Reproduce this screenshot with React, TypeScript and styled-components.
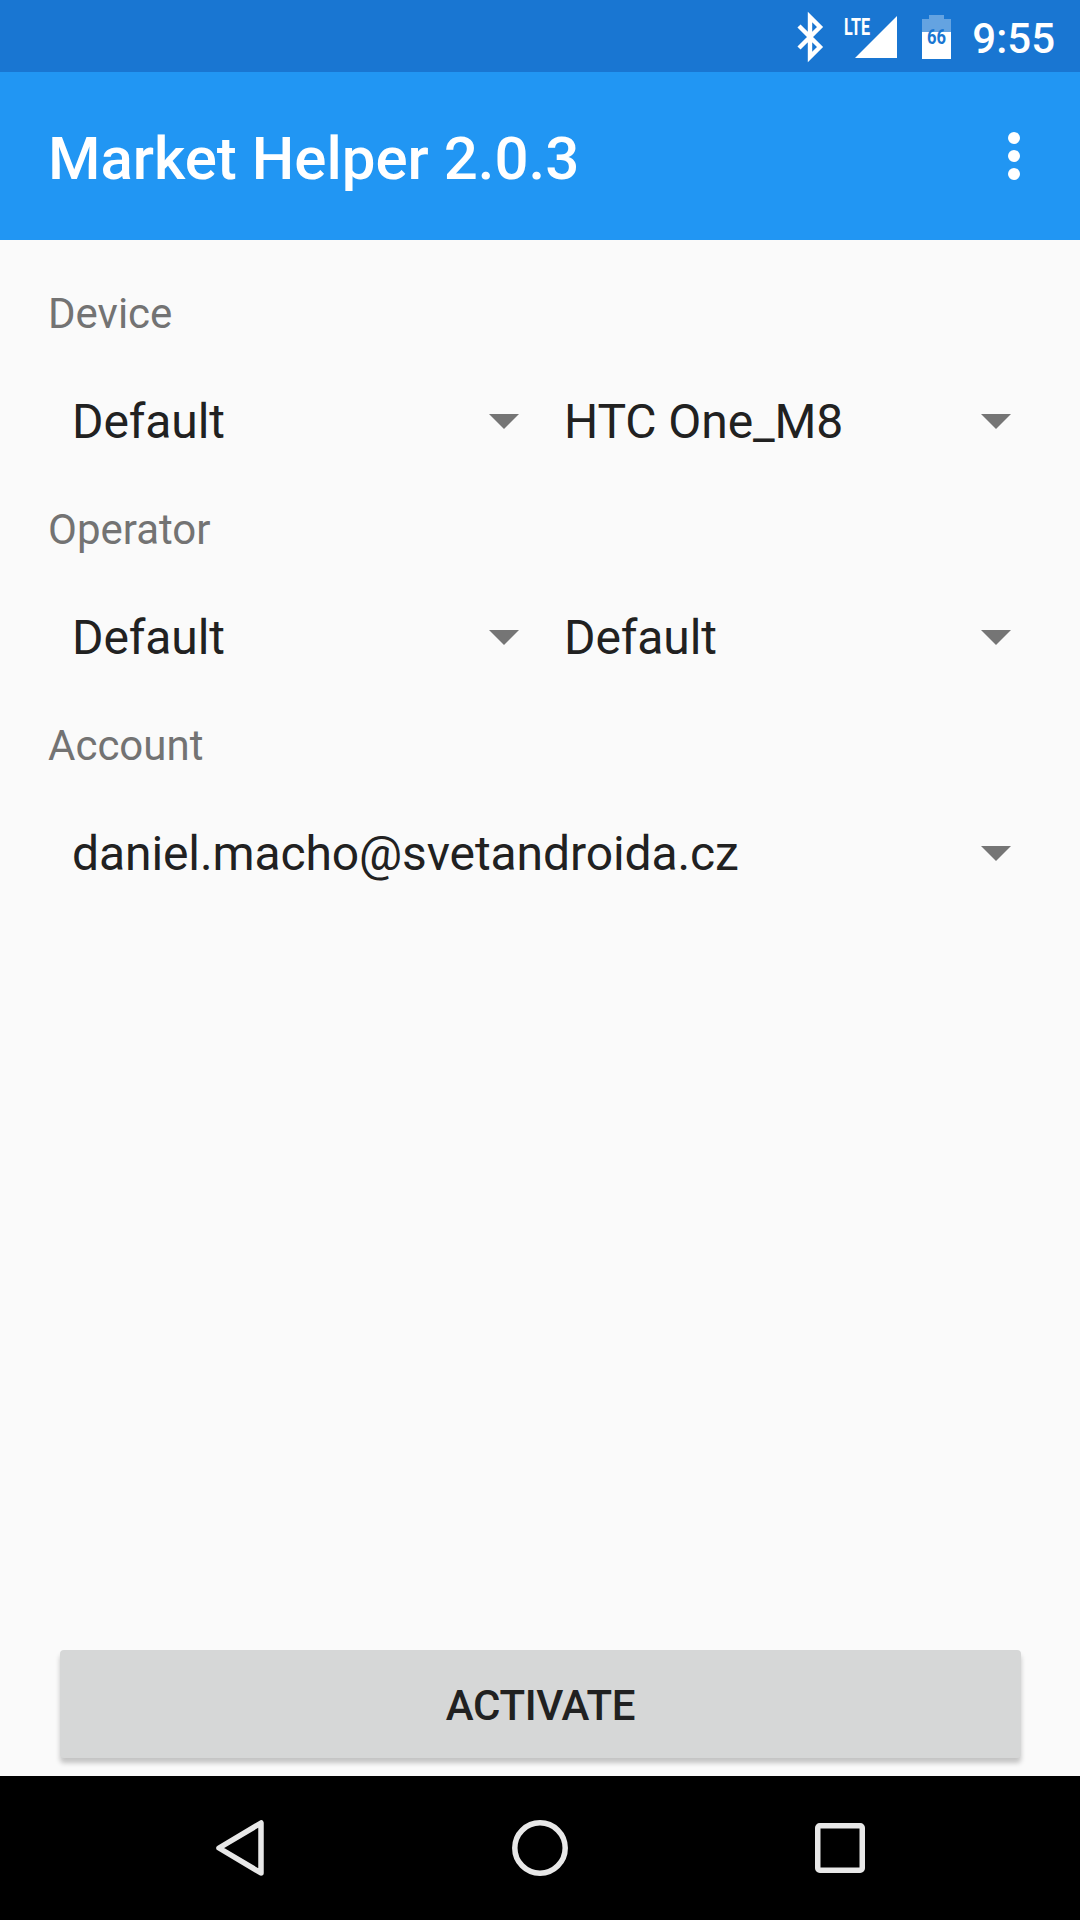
import React from 'react'
import styled, { createGlobalStyle } from 'styled-components'

const GlobalStyle = createGlobalStyle`
  html, body {
    margin: 0;
    padding: 0;
    background: #fafafa;
  }
  body {
    font-family: Roboto, "Liberation Sans", sans-serif;
  }
`

const Page = styled.div`
  width: 1080px;
  height: 1920px;
  display: flex;
  flex-direction: column;
  overflow: hidden;
  background: #fafafa;
`

const StatusBar = styled.div`
  height: 72px;
  box-sizing: border-box;
  flex: none;
  display: flex;
  align-items: center;
  justify-content: flex-end;
  padding: 2px 25px 0 0;
  background: #1976d2;
  color: #fff;
`

const StatusIcon = styled.svg<{ $gap: number }>`
  display: block;
  flex: none;
  overflow: visible;
  margin-right: ${(p) => p.$gap}px;
`

const Clock = styled.span`
  margin-top: 4px;
  font-size: 42px;
  font-weight: 500;
  line-height: 66px;
`

const AppBar = styled.header`
  height: 168px;
  box-sizing: border-box;
  flex: none;
  display: flex;
  align-items: center;
  justify-content: space-between;
  padding: 0 60px 0 48px;
  background: #2196f3;
`

const Title = styled.h1`
  margin: 5px 0 0;
  color: #fff;
  font-size: 60px;
  font-weight: 500;
  line-height: 80px;
`

const Overflow = styled.div`
  display: flex;
  flex-direction: column;
  gap: 6px;
`

const Dot = styled.span`
  width: 12px;
  height: 12px;
  border-radius: 50%;
  background: #fff;
`

const Content = styled.main`
  flex: 1;
  display: flex;
  flex-direction: column;
  padding: 49px 48px 0;
`

const Label = styled.div`
  height: 50px;
  color: #737373;
  font-size: 42px;
  line-height: 50px;
`

const Row = styled.div`
  display: flex;
  height: 166px;
  padding-top: 10px;
  box-sizing: border-box;
`

const Spinner = styled.div`
  flex: 1;
  height: 144px;
  padding: 0 21px 0 24px;
  display: flex;
  align-items: center;
  justify-content: space-between;
  color: #212121;
  font-size: 48px;
  letter-spacing: -0.1px;
`

const Arrow = styled.span`
  width: 0;
  height: 0;
  border-left: 15px solid transparent;
  border-right: 15px solid transparent;
  border-top: 15px solid #757575;
`

const ActivateButton = styled.button`
  margin: auto 11px 18px 12px;
  height: 108px;
  flex: none;
  border: 0;
  border-radius: 4px;
  padding: 2px 0 0;
  background: #d6d7d7;
  box-shadow: 0 5px 5px rgba(0, 0, 0, 0.22);
  color: #212121;
  font-family: Roboto, "Liberation Sans", sans-serif;
  font-size: 42px;
  font-weight: 500;
  letter-spacing: -0.3px;
`

const NavBar = styled.nav`
  height: 144px;
  flex: none;
  display: flex;
  justify-content: center;
  align-items: center;
  background: #000;
`

const NavCell = styled.div`
  width: 300px;
  display: flex;
  justify-content: center;
`

function Bluetooth() {
  return (
    <StatusIcon $gap={20} width="26" height="44" viewBox="0 0 26 44">
      <path d="M2 11 L23 32 L13 42 V2 L23 12 L2 33" fill="none" stroke="#fff" strokeWidth="4.4" />
    </StatusIcon>
  )
}

function Signal() {
  return (
    <StatusIcon $gap={25} width="54" height="44" viewBox="0 0 54 44">
      <path d="M54 1 V43 H12 Z" fill="#fff" />
      <text x="1" y="20" fill="#fff" fontFamily="Roboto" fontWeight="700" fontSize="24" textLength="26" lengthAdjust="spacingAndGlyphs">LTE</text>
    </StatusIcon>
  )
}

function Battery() {
  return (
    <StatusIcon $gap={21} width="29" height="44" viewBox="0 0 29 44">
      <path d="M7 0 H22 V4 H29 V17 H0 V4 H7 Z" fill="#fff" opacity="0.33" />
      <path d="M0 17 H29 V44 H0 Z" fill="#fff" />
      <text x="14.5" y="29" textAnchor="middle" fill="#1976d2" fontFamily="Roboto" fontWeight="700" fontSize="21" textLength="19" lengthAdjust="spacingAndGlyphs">66</text>
    </StatusIcon>
  )
}

const SPINNER_ROWS = [
  { label: 'Device', values: ['Default', 'HTC One_M8'] },
  { label: 'Operator', values: ['Default', 'Default'] },
  { label: 'Account', values: ['daniel.macho@svetandroida.cz'] },
]

export default function App() {
  return (
    <Page>
      <GlobalStyle />
      <StatusBar>
        <Bluetooth />
        <Signal />
        <Battery />
        <Clock>9:55</Clock>
      </StatusBar>
      <AppBar>
        <Title>Market Helper 2.0.3</Title>
        <Overflow>
          <Dot />
          <Dot />
          <Dot />
        </Overflow>
      </AppBar>
      <Content>
        {SPINNER_ROWS.map((row) => (
          <React.Fragment key={row.label}>
            <Label>{row.label}</Label>
            <Row>
              {row.values.map((value, i) => (
                <Spinner key={i}>
                  {value}
                  <Arrow />
                </Spinner>
              ))}
            </Row>
          </React.Fragment>
        ))}
        <ActivateButton>ACTIVATE</ActivateButton>
      </Content>
      <NavBar>
        <NavCell>
          <svg width="48" height="58" viewBox="0 0 48 58">
            <path d="M45 4 V54 L3 29 Z" fill="none" stroke="#e8e8e8" strokeWidth="5.5" strokeLinejoin="round" />
          </svg>
        </NavCell>
        <NavCell>
          <svg width="56" height="56" viewBox="0 0 56 56">
            <circle cx="28" cy="28" r="25.2" fill="none" stroke="#e8e8e8" strokeWidth="5.5" />
          </svg>
        </NavCell>
        <NavCell>
          <svg width="50" height="50" viewBox="0 0 50 50">
            <rect x="2.75" y="2.75" width="44.5" height="44.5" rx="2" fill="none" stroke="#e8e8e8" strokeWidth="5.5" />
          </svg>
        </NavCell>
      </NavBar>
    </Page>
  )
}
